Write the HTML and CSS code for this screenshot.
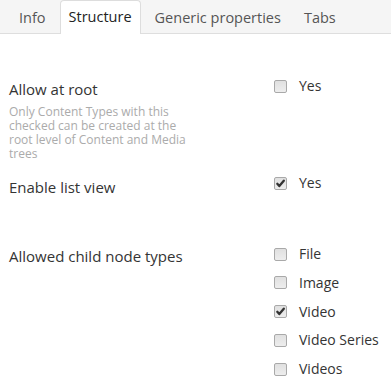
FILE: index.html
```html
<!DOCTYPE html>
<html>
<head>
<meta charset="utf-8">
<link rel="stylesheet" href="styles.css">
</head>
<body>
<div class="tabs">
  <div class="tab">Info</div>
  <div class="tab active">Structure</div>
  <div class="tab">Generic properties</div>
  <div class="tab">Tabs</div>
</div>

<div class="form">
  <div class="row row-root">
    <div class="label-col">
      <div class="label">Allow at root</div>
      <div class="desc">Only Content Types with this checked can be created at the root level of Content and Media trees</div>
    </div>
    <div class="control-col">
      <label class="check"><span class="box"></span><span class="text">Yes</span></label>
    </div>
  </div>

  <div class="row row-list">
    <div class="label-col">
      <div class="label">Enable list view</div>
    </div>
    <div class="control-col">
      <label class="check"><span class="box checked"><svg viewBox="0 0 13 13" width="13" height="13"><path d="M3.3 6.8 L5.3 9.1 L9.8 3.7" fill="none" stroke="#333333" stroke-width="2.3" stroke-linecap="round" stroke-linejoin="round"/></svg></span><span class="text">Yes</span></label>
    </div>
  </div>

  <div class="row row-types">
    <div class="label-col">
      <div class="label">Allowed child node types</div>
    </div>
    <div class="control-col list">
      <label class="check"><span class="box"></span><span class="text">File</span></label>
      <label class="check"><span class="box"></span><span class="text">Image</span></label>
      <label class="check"><span class="box checked"><svg viewBox="0 0 13 13" width="13" height="13"><path d="M3.3 6.8 L5.3 9.1 L9.8 3.7" fill="none" stroke="#333333" stroke-width="2.3" stroke-linecap="round" stroke-linejoin="round"/></svg></span><span class="text">Video</span></label>
      <label class="check"><span class="box"></span><span class="text">Video Series</span></label>
      <label class="check"><span class="box"></span><span class="text">Videos</span></label>
    </div>
  </div>
</div>
</body>
</html>
```

FILE: styles.css
```css
html, body {
  margin: 0;
  padding: 0;
  background: #ffffff;
}

body {
  font-family: "Open Sans", "Noto Sans", sans-serif;
  color: #343434;
  width: 391px;
  height: 383px;
  overflow: hidden;
}

.tabs {
  display: flex;
  align-items: flex-end;
  height: 33px;
  padding-left: 10px;
  background: #f5f5f5;
  border-bottom: 1px solid #dedede;
}

.tab {
  font-size: 14.5px;
  line-height: 20px;
  color: #555555;
  padding: 6px 8px 6px;
  margin-right: 5px;
  margin-bottom: -1px;
  border: 1px solid transparent;
  border-bottom: none;
  border-radius: 4px 4px 0 0;
}

.tab.active {
  background: #ffffff;
  color: #222222;
  border-color: #dddddd;
  padding-bottom: 7px;
}

.form {
  padding-left: 9px;
}

.row {
  display: grid;
  grid-template-columns: 264px 1fr;
}

.row-root {
  margin-top: 41px;
}

.row-root .control-col {
  padding-top: 1px;
}

.row-list {
  margin-top: 12px;
}

.row-types {
  margin-top: 45px;
}

.row-types .control-col {
  padding-top: 2px;
}

.label-col {
  padding-top: 4px;
}

.label {
  font-size: 15px;
  line-height: 20px;
  color: #343434;
}

.desc {
  margin-top: 6px;
  width: 190px;
  font-size: 12px;
  line-height: 14px;
  color: #ababab;
}

.control-col {
  display: flex;
  flex-direction: column;
  gap: 8.75px;
}

.check {
  display: flex;
  align-items: center;
  height: 20px;
}

.box {
  box-sizing: border-box;
  width: 13px;
  height: 13px;
  margin-left: 1px;
  border: 1px solid #a9a9a9;
  border-radius: 2px;
  background: linear-gradient(#e0e0e0, #ededed);
  display: flex;
  align-items: center;
  justify-content: center;
  flex-shrink: 0;
}

.box svg {
  display: block;
  margin: -1px;
}

.text {
  margin-left: 12px;
  font-size: 14px;
  line-height: 20px;
  color: #343434;
}
```
